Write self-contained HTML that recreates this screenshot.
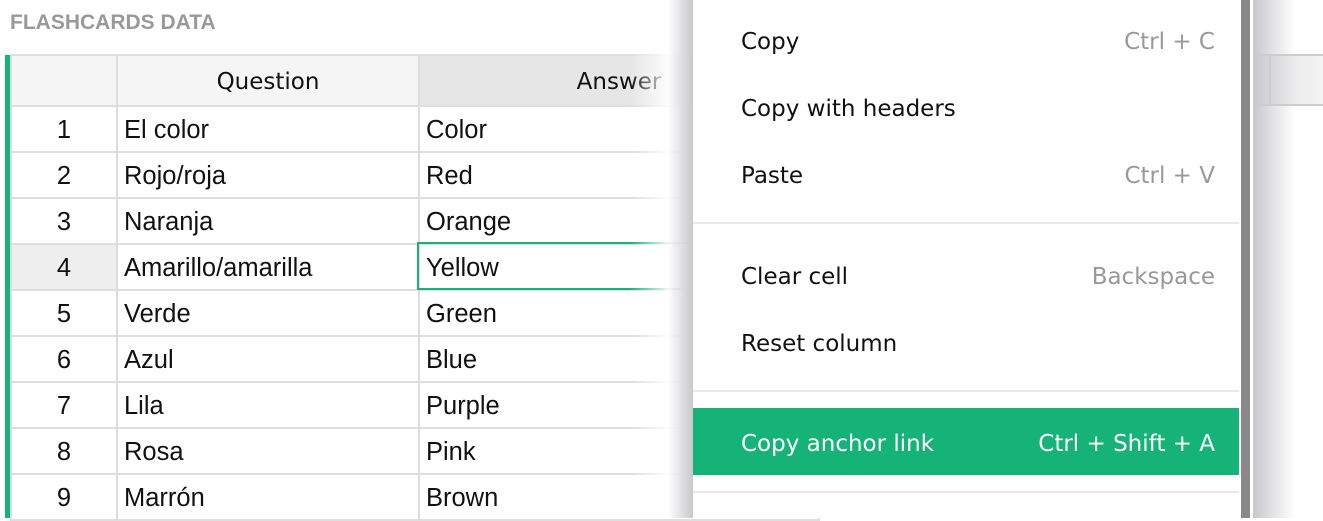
<!DOCTYPE html>
<html><head><style>
*{margin:0;padding:0;box-sizing:border-box}
body{width:1323px;height:518px;overflow:hidden;background:#fff;font-family:"Liberation Sans",sans-serif;position:relative}
.title{position:absolute;left:10px;top:11px;font-size:21px;font-weight:bold;color:#999}
.bar{position:absolute;left:5px;top:55px;width:5px;height:463px;background:#16b378}
table{position:absolute;left:10px;top:54px;border-collapse:collapse;font-size:25.5px;color:#111}
td{border:2px solid #ddd;height:46px;padding:2px 6px 0;white-space:nowrap}
tr.h td{height:51px;background:#f5f5f5;text-align:center;font-family:"DejaVu Sans",sans-serif;font-size:23px}
td.n{width:106px;text-align:center;background:#fff}
td.q{width:302px}
td.a{width:400px}
tr.h td.a{background:#e6e6e6}
.sel{position:absolute;left:417px;top:242px;width:300px;height:48px;border:2px solid #16b378;border-right:none}
.shadowL{position:absolute;left:630px;top:0;width:63px;height:518px;background:linear-gradient(to right,rgba(255,255,255,0),rgba(255,255,255,.9) 60%,#c8c8cc)}
.menu{position:absolute;left:693px;top:0;width:548px;height:518px;background:#fff;font-size:23px;color:#111;font-family:"DejaVu Sans",sans-serif}
.it{position:absolute;left:48px;right:26px;display:flex;justify-content:space-between}
.it span:last-child{color:#999}
.sep{position:absolute;left:0;right:2px;height:2px;background:#e8e8e8}
.hl{position:absolute;left:0;right:2px;top:408px;height:67px;background:#16b378}
.vb{position:absolute;left:1241px;top:0;width:9px;height:518px;background:#888}
.shadowR{position:absolute;left:1253px;top:0;width:70px;height:518px;background:linear-gradient(to right,#c8c8cc,#fff 60%)}
.rh{position:absolute;left:1253px;top:54px;width:70px;height:52px;border-top:2px solid #ccc;border-bottom:2px solid #ccc;background:linear-gradient(to right,rgba(200,200,204,.6),rgba(238,238,238,.6))}
.rv{position:absolute;left:1269px;top:54px;width:2px;height:52px;background:#ccc}
</style></head><body>
<div class="title">FLASHCARDS DATA</div>
<table>
<tr class="h"><td class="n"></td><td class="q" style="text-align:center">Question</td><td class="a" style="text-align:center">Answer</td></tr>
<tr><td class="n">1</td><td class="q">El color</td><td class="a">Color</td></tr>
<tr><td class="n">2</td><td class="q">Rojo/roja</td><td class="a">Red</td></tr>
<tr><td class="n">3</td><td class="q">Naranja</td><td class="a">Orange</td></tr>
<tr><td class="n" style="background:#eee">4</td><td class="q">Amarillo/amarilla</td><td class="a">Yellow</td></tr>
<tr><td class="n">5</td><td class="q">Verde</td><td class="a">Green</td></tr>
<tr><td class="n">6</td><td class="q">Azul</td><td class="a">Blue</td></tr>
<tr><td class="n">7</td><td class="q">Lila</td><td class="a">Purple</td></tr>
<tr><td class="n">8</td><td class="q">Rosa</td><td class="a">Pink</td></tr>
<tr><td class="n">9</td><td class="q">Marrón</td><td class="a">Brown</td></tr>
</table>
<div class="bar"></div>
<div class="sel"></div>
<div class="shadowL"></div>
<div class="menu">
<div class="it" style="top:29px"><span>Copy</span><span>Ctrl + C</span></div>
<div class="it" style="top:96px"><span>Copy with headers</span><span></span></div>
<div class="it" style="top:163px"><span>Paste</span><span>Ctrl + V</span></div>
<div class="sep" style="top:222px"></div>
<div class="it" style="top:264px"><span>Clear cell</span><span>Backspace</span></div>
<div class="it" style="top:331px"><span>Reset column</span><span></span></div>
<div class="sep" style="top:390px"></div>
<div class="hl"></div>
<div class="it" style="top:431px;color:#fff"><span>Copy anchor link</span><span style="color:#fff">Ctrl + Shift + A</span></div>
<div class="sep" style="top:491px"></div>
</div>
<div class="vb"></div>
<div class="shadowR"></div>
<div class="rh"></div>
<div class="rv"></div>
</body></html>
